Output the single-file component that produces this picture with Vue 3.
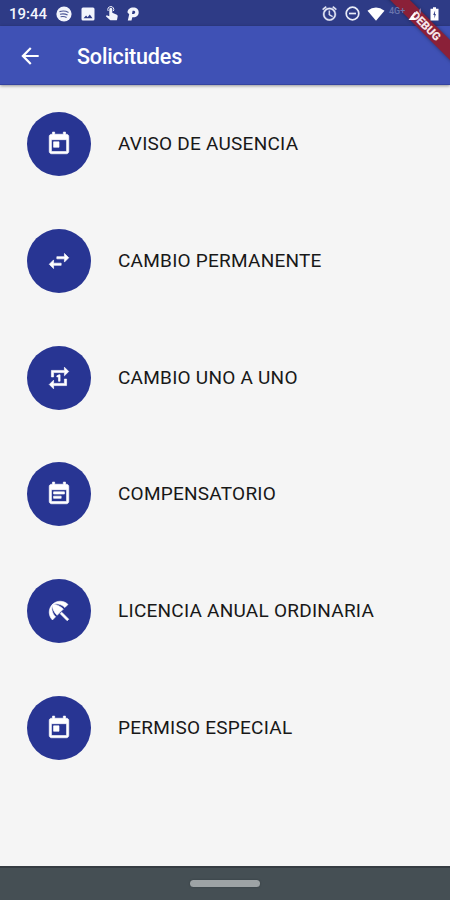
<script setup>
import { ref } from 'vue'

const today = 'M19 3h-1V1h-2v2H8V1H6v2H5c-1.11 0-1.99.9-1.99 2L3 19c0 1.1.89 2 2 2h14c1.1 0 2-.9 2-2V5c0-1.1-.9-2-2-2zm0 16H5V8h14v11zM7 10h5v5H7z'

const solicitudes = ref([
    { nombre: 'AVISO DE AUSENCIA', icono: today },
    { nombre: 'CAMBIO PERMANENTE', icono: 'M6.99 11L3 15l3.99 4v-3H14v-2H6.99v-3zM21 9l-3.99-4v3H10v2h7.01v3L21 9z' },
    { nombre: 'CAMBIO UNO A UNO', icono: 'M7 7h10v3l4-4-4-4v3H5v6h2V7zm10 10H7v-3l-4 4 4 4v-3h12v-6h-2v4zm-4-2V9h-1l-2 1v1h1.5v4H13z' },
    { nombre: 'COMPENSATORIO', icono: 'M17 10H7v2h10v-2zm2-7h-1V1h-2v2H8V1H6v2H5c-1.11 0-1.99.9-1.99 2L3 19c0 1.1.89 2 2 2h14c1.1 0 2-.9 2-2V5c0-1.1-.9-2-2-2zm0 16H5V8h14v11zm-5-5H7v2h7v-2z' },
    { nombre: 'LICENCIA ANUAL ORDINARIA', icono: 'M13.127 14.56l1.43-1.43 6.44 6.443L19.57 21zm4.293-5.73l2.86-2.86c-3.95-3.95-10.35-3.96-14.3-.02 3.93-1.3 8.31-.25 11.44 2.88zM5.95 5.98c-3.94 3.95-3.93 10.35.02 14.3l2.86-2.86C5.7 14.29 4.65 9.91 5.95 5.98zm.02-.02l-.01.01c-.38 3.01 1.17 6.88 4.3 10.02l5.73-5.73c-3.13-3.13-7.01-4.68-10.02-4.3z' },
    { nombre: 'PERMISO ESPECIAL', icono: today }
])
</script>

<template>
    <div class="pantalla">
        <div class="status-bar">
            <div class="status-left">
                <span class="hora">19:44</span>
                <svg width="16" height="16" viewBox="0 0 16 16">
                    <circle cx="8" cy="8" r="7.6" fill="#f3f5fc" />
                    <path d="M3.5 5.6c3-.9 6.500-.6 9 .8M4 8.300c2.700-.7 5.400-.4 7.600.8M4.600 10.800c2.200-.5 4.200-.3 6 .7" fill="none" stroke="#4a5596" stroke-width="1.100" />
                </svg>
                <svg width="14" height="14" viewBox="0 0 14 14">
                    <path fill="#f3f5fc" fill-rule="evenodd" d="M2 .5h10q1.500 0 1.500 1.500v10q0 1.500-1.500 1.500H2Q.5 13.500.5 12V2Q.5.5 2 .5zM2.500 11.300h9L8.800 7.500l-2.200 2.700-1.500-1.700z" />
                </svg>
                <svg class="touch" width="14" height="15" viewBox="0 0 14 15">
                    <path fill="#f3f5fc" d="M4.300 7V3.300a1.500 1.500 0 0 1 3 0v3.400l4.600 2q1 .5.800 1.500l-.6 3.200q-.2.900-1.100.9H6q-.6 0-1-.4L.8 10.300l.9-1 2.600.9z" />
                    <path fill="none" stroke="#f3f5fc" stroke-width="1" d="M3.200 5A3 3 0 1 1 8.400 5" />
                </svg>
                <svg class="logo-p" width="12" height="14" viewBox="0 0 12 14">
                    <path fill="#f3f5fc" fill-rule="evenodd" d="M.5 5.500C.5 2.500 3 .5 6.300.5c3.300 0 5.400 1.800 5.400 4.700 0 3.200-2.300 5-5.300 5H5.300l-.8 3.300H.8L2.200 7.300zM5.600 3.800 5 6.900c1.900.3 3.200-.2 3.200-1.700 0-1-.9-1.500-2.600-1.400z" />
                </svg>
            </div>
            <div class="status-right">
                <svg width="15" height="15" viewBox="1.500 1.500 21 21" fill="#e9ecf8" stroke="#e9ecf8" stroke-width="0.500">
                    <path d="M22 5.720l-4.600-3.860-1.290 1.530 4.600 3.860L22 5.720zM7.880 3.390L6.600 1.860 2 5.710l1.290 1.530 4.590-3.850zM12.500 8H11v6l4.750 2.850.75-1.230-4-2.370V8zM12 4c-4.970 0-9 4.030-9 9s4.020 9 9 9c4.970 0 9-4.030 9-9s-4.030-9-9-9zm0 16c-3.870 0-7-3.130-7-7s3.130-7 7-7 7 3.130 7 7-3.130 7-7 7z" />
                </svg>
                <svg class="no-molestar" width="15" height="15" viewBox="0 0 15 15" fill="none" stroke="#e9ecf8" stroke-width="1.700">
                    <circle cx="7.500" cy="7.500" r="6.300" />
                    <path d="M4 7.500h7" />
                </svg>
                <svg class="wifi" width="18" height="14" viewBox="0 0 18 14">
                    <path fill="#fff" d="M.5 3.800Q9-2.800 17.500 3.800L9 13.700z" />
                </svg>
                <span class="red">4G+</span>
                <svg class="senal" width="14" height="14" viewBox="0 0 14 14">
                    <path fill="#8b6f9c" d="M13 1v6l-2-2V3z" />
                    <path fill="#fff" d="M.5 13 6.500 5l1 1-2.500 3.500L7.500 12v1z" />
                </svg>
                <svg class="bateria" width="9" height="14" viewBox="0 0 9 14">
                    <path fill="#fff" d="M.5 1.700H3V.3h3v1.400h2.500v11.800h-8z" />
                    <path fill="#344087" d="M5.100 3.600 3.200 8h1.200v3.500L5.900 7H5z" />
                </svg>
            </div>
        </div>

        <header class="app-bar">
            <svg class="volver" width="26" height="26" viewBox="0 0 24 24" fill="#fff">
                <path d="M20 11H7.830l5.590-5.590L12 4l-8 8 8 8 1.410-1.410L7.830 13H20v-2z" />
            </svg>
            <h1>Solicitudes</h1>
        </header>

        <main class="lista">
            <div v-for="item in solicitudes" :key="item.nombre" class="item">
                <div class="circulo">
                    <svg width="26" height="26" viewBox="0 0 24 24" fill="#fff" stroke="#fff" stroke-width="0.600">
                        <path :d="item.icono" />
                    </svg>
                </div>
                <span class="nombre">{{ item.nombre }}</span>
            </div>
        </main>

        <footer class="nav-bar">
            <div class="pildora"></div>
        </footer>

        <div class="debug"><span>DEBUG</span></div>
    </div>
</template>

<style>
body {
    margin: 0;
}
</style>

<style scoped>
.pantalla {
    position: relative;
    display: flex;
    flex-direction: column;
    width: 450px;
    height: 900px;
    overflow: hidden;
    background: #f5f5f5;
    font-family: Roboto, "Liberation Sans", sans-serif;
}

svg {
    display: block;
    flex-shrink: 0;
}

.status-bar {
    display: flex;
    justify-content: space-between;
    align-items: center;
    box-sizing: border-box;
    height: 26px;
    padding: 1px 11px 0 9px;
    background: #2e3b86;
}

.status-left,
.status-right {
    display: flex;
    align-items: center;
}

/* los iconos del sistema van por encima de la cinta */
.status-right {
    position: relative;
    z-index: 2;
}

.status-left {
    gap: 9px;
}

.hora {
    width: 38px;
    color: #f3f5fc;
    font-size: 15px;
    font-weight: 500;
    white-space: nowrap;
}

.touch {
    margin-left: 1px;
}

.logo-p {
    margin-left: -1px;
}

.no-molestar {
    margin-left: 8px;
}

.wifi {
    margin-left: 7px;
}

.red {
    width: 18px;
    margin-left: 4px;
    margin-top: -6px;
    color: #6974ad;
    font-size: 9px;
    font-weight: 500;
}

.senal {
    margin-left: 1px;
}

.bateria {
    margin-left: 8px;
}

.app-bar {
    position: relative;
    display: flex;
    align-items: center;
    box-sizing: border-box;
    height: 59px;
    padding: 2px 17px 0;
    background: #3f51b5;
    border-bottom: 1px solid #3443a0;
    box-shadow: 0 1px 3px rgba(0, 0, 0, 0.4);
}

.app-bar h1 {
    margin: 1px 0 0 34px;
    color: #fff;
    font-size: 21.5px;
    font-weight: 500;
    line-height: 28px;
    letter-spacing: -0.15px;
}

.lista {
    flex: 1;
    display: flex;
    flex-direction: column;
    gap: 52.8px;
    padding: 27px 27px 0;
}

.item {
    display: flex;
    align-items: center;
    gap: 27px;
}

.circulo {
    display: flex;
    justify-content: center;
    align-items: center;
    width: 64px;
    height: 64px;
    border-radius: 50%;
    background: #283593;
}

.nombre {
    color: #181818;
    font-size: 19px;
    line-height: 24px;
    letter-spacing: 0.24px;
}

.nav-bar {
    display: flex;
    justify-content: center;
    align-items: center;
    box-sizing: border-box;
    height: 34px;
    padding-bottom: 2px;
    border-top: 2px solid #353c42;
    background: #454f54;
}

.pildora {
    width: 70px;
    height: 7px;
    border-radius: 4px;
    background: #9da3a5;
    box-shadow: 0 0 2px #333b3f;
}

/* cinta diagonal de la esquina */
.debug {
    position: absolute;
    top: 19px;
    right: -26px;
    display: flex;
    justify-content: center;
    align-items: center;
    width: 100px;
    height: 14px;
    transform: rotate(45deg);
    background: #8a2038;
    box-shadow: 0 0 4px rgba(0, 0, 0, 0.4);
}

.debug span {
    color: #f6e6ea;
    font-size: 11.5px;
    font-weight: 900;
    line-height: 14px;
    letter-spacing: -0.2px;
}
</style>
